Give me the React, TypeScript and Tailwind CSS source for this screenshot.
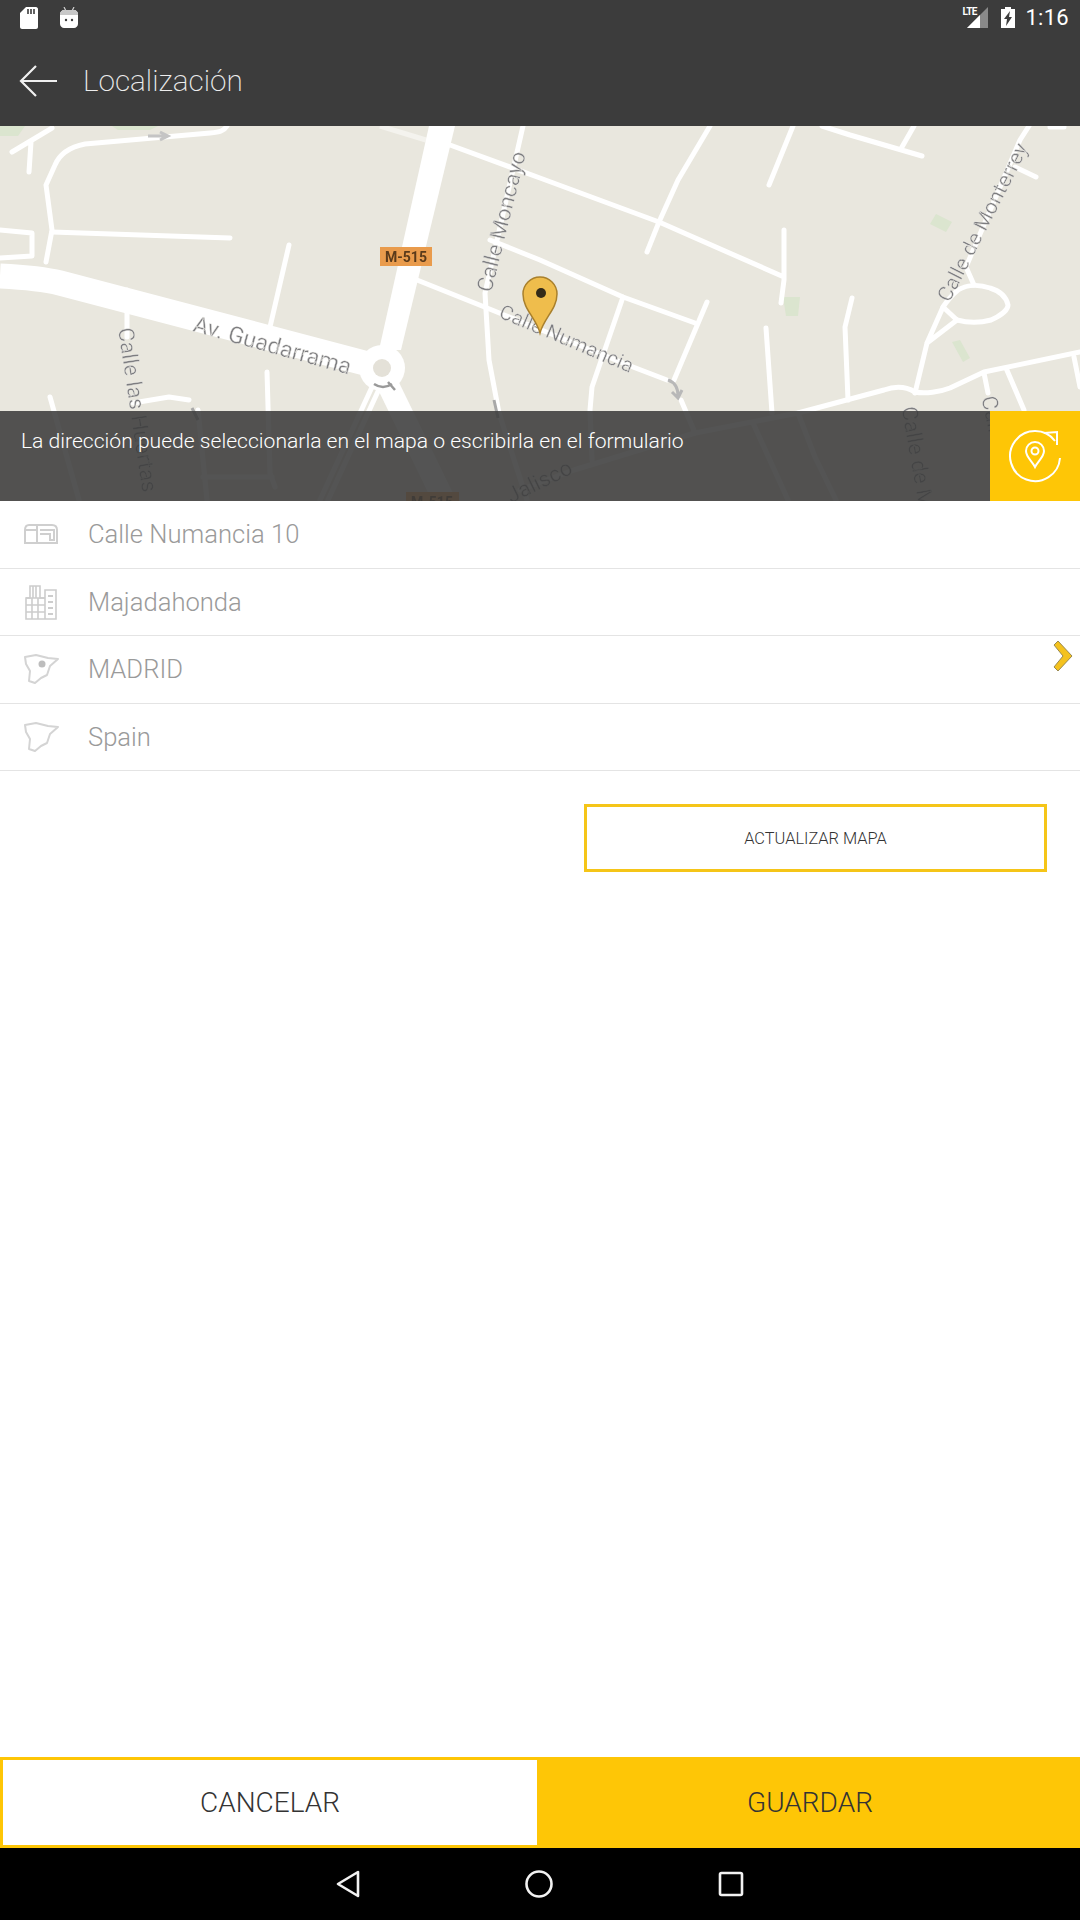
const thinRoads = [
  "M12 152L52 128M31 142L29 172",
  "M227 126C224 131 220 132 210 133L85 144C70 147 60 153 55 165L46 185L52 230L46 262",
  "M52 232L230 238",
  "M0 230L32 233L32 256L0 258",
  "M450 145L540 178L659 222L784 277L784 280L781 303M784 230L784 277",
  "M822 126L850 135L922 156M914 126L902 147",
  "M793 126L769 185",
  "M710 126L678 180L659 222L647 252",
  "M1015 167L1036 177M1029 126L1020 140L966 267L974 285M1050 127L1064 127",
  "M289 245L270 327",
  "M127 290L127 337M133 403L169 397L189 400",
  "M50 397L79 500M267 372L270 473L275 487M203 477L272 477M198 410L207 500",
  "M523 126L485 293L489 360L499 413L527 500",
  "M417 280L492 310L633 367L667 380M681 400L695 433",
  "M490 240L540 260L623 297L695 323",
  "M623 297L592 387L590 410L592 460",
  "M707 302L674 380",
  "M766 328L772 413",
  "M852 298L845 327L848 400",
  "M520 490L574 470L695 433L798 413L884 390C895 386 905 386 915 392C925 394 940 392 950 388L984 372L1080 352",
  "M915 393L927 343L943 307M927 343L957 320",
  "M943 307L957 320C968 323 980 323 991 320C1000 316 1008 310 1008 305C1006 296 1000 291 990 288C978 284 966 285 958 290C952 295 947 301 943 307Z",
  "M984 373L988 393M1006 368L1024 410M1074 357L1080 387",
  "M753 423L788 500M798 413L815 457L836 500",
  "M372 387L320 500M380 387L328 500",
];

const labels = [
  { text: "Calle Moncayo", x: 503, y: 222, r: -76, size: 22 },
  { text: "Calle Numancia", x: 566, y: 340, r: 23, size: 20.5 },
  { text: "Av. Guadarrama", x: 272, y: 347, r: 15.5, size: 23 },
  { text: "Calle las Huertas", x: 136, y: 410, r: 81.5, size: 22 },
  { text: "Calle de Monterrey", x: 984, y: 223, r: -63, size: 21 },
  { text: "Calle de Monterrey", x: 923, y: 497, r: 80, size: 22 },
  { text: "Calle", x: 992, y: 420, r: 78, size: 22 },
  { text: "Jalisco", x: 540, y: 483, r: -26, size: 22 },
];

function MapDrawing() {
  return (
    <svg viewBox="0 126 1080 375" className="absolute inset-0 w-full h-full blur-[0.6px]">
      <rect x="0" y="126" width="1080" height="375" fill="#e9e7de" />
      <path d="M0 126H25L18 136H0ZM112 126H158L150 130H118Z" fill="#dbe5cf" />
      <path d="M936 214L952 222L946 232L930 224ZM783 297H800L798 316H786ZM952 342L960 340L970 358L963 362Z" fill="#dbe5cf" />
      <g fill="none" stroke="#ffffff" strokeWidth="5" strokeLinejoin="round" strokeLinecap="round">
        {thinRoads.map((d) => (
          <path key={d} d={d} />
        ))}
      </g>
      <path d="M380 126L426 140" fill="none" stroke="#f4f3ee" strokeWidth="5" />
      <path d="M429 126H455L401 350H379Z" fill="#ffffff" />
      <path d="M0 276C20 277 40 278 60 283L372 365" fill="none" stroke="#ffffff" strokeWidth="25" />
      <path d="M389 387L444 500" fill="none" stroke="#ffffff" strokeWidth="22" />
      <circle cx="382" cy="368" r="23" fill="#ffffff" />
      <circle cx="382" cy="368" r="9" fill="#e4e1d8" />
      <path d="M148 136H168M160 132L168 136L160 140" fill="none" stroke="#c4c4c4" strokeWidth="3" />
      <path d="M668 380C674 382 678 386 678 396M672 392L678 398L682 390" fill="none" stroke="#b8b8b8" strokeWidth="3" />
      <path d="M374 384C380 388 386 388 392 384M388 382L395 390" fill="none" stroke="#9a9a9a" strokeWidth="2.5" />
      <path d="M192 408L198 420M494 400L498 418" fill="none" stroke="#a8a8a8" strokeWidth="3" />
      {labels.map((l) => (
        <text
          key={l.text + l.x}
          x={l.x}
          y={l.y}
          fontSize={l.size}
          fill="#7d7d80"
          stroke="#f4f3ee"
          strokeWidth="0.4"
          textAnchor="middle"
          dominantBaseline="middle"
          fontFamily="Roboto, sans-serif"
          transform={`rotate(${l.r} ${l.x} ${l.y})`}
        >
          {l.text}
        </text>
      ))}
      <rect x="380" y="247" width="52" height="19" fill="#e99b4c" />
      <text x="406" y="262" fontSize="14" fontWeight="700" fill="#5a3a1a" textAnchor="middle" fontFamily="Roboto, sans-serif">M-515</text>
      <rect x="406" y="492" width="53" height="19" fill="#f0a050" />
      <text x="432" y="507" fontSize="14" fontWeight="700" fill="#5a3a1a" textAnchor="middle" fontFamily="Roboto, sans-serif">M-515</text>
      <path d="M540 333C536 318 523 309 523 294A17 17 0 0 1 557 294C557 309 544 318 540 333Z" fill="#efbd4c" stroke="#a9802c" strokeWidth="1.5" />
      <circle cx="541" cy="293" r="5" fill="#332a18" />
    </svg>
  );
}

function SpainIcon({ dot }: { dot?: boolean }) {
  return (
    <svg viewBox="0 0 36 30" className="w-[36px] h-[30px] blur-[0.4px]" fill="none" stroke="#d4d4d4" strokeWidth="2" strokeLinejoin="round">
      <path d="M2 3L13 1L25 4L35 5L27 12L24 21L18 24L12 29L6 27L7 17L3 10Z" />
      {dot && <circle cx="19" cy="10" r="3.5" fill="#bdbdbd" stroke="none" />}
    </svg>
  );
}

function StreetIcon() {
  return (
    <svg viewBox="0 0 34 20" className="w-[34px] h-[20px] blur-[0.4px]" fill="none" stroke="#cfcfcf" strokeWidth="2">
      <path d="M1 6C1 2 3 1 5 1H28C32 1 33 3 33 6V19H1Z" />
      <path d="M13 2V19M1 6H13M16 6H30V16H26V10H16" />
    </svg>
  );
}

function BuildingIcon() {
  return (
    <svg viewBox="0 0 32 36" className="w-[32px] h-[36px] blur-[0.4px]" fill="none" stroke="#cdcdcd" strokeWidth="1.6">
      <path d="M1 35V14H5V2H15V14H20V35ZM20 35V6H31V35Z" />
      <path d="M1 21H20M1 28H20M7 14V35M13 14V35M8 2V14M11 2V14M1 14H20" />
      <path d="M23 12H28M23 18H28M23 24H28M23 30H28" strokeWidth="2" />
    </svg>
  );
}

const rows = [
  { label: "Calle Numancia 10", icon: <StreetIcon /> },
  { label: "Majadahonda", icon: <BuildingIcon /> },
  { label: "MADRID", icon: <SpainIcon dot />, arrow: true },
  { label: "Spain", icon: <SpainIcon /> },
];

export default function App() {
  return (
    <div className="min-h-[1920px] flex flex-col bg-white font-['Roboto',sans-serif]">
      {/* header */}
      <div className="h-[126px] bg-[#3c3c3c] text-white">
        <div className="h-[35px] flex items-center pl-[20px] pr-[11px]">
          <svg viewBox="0 0 18 22" className="w-[18px] h-[22px]">
            <path d="M6 0H16C17 0 18 1 18 2V20C18 21 17 22 16 22H2C1 22 0 21 0 20V6Z" fill="#ffffff" />
            <path d="M8 2V7M11 2V7M14 2V7" stroke="#3c3c3c" strokeWidth="1.6" />
          </svg>
          <svg viewBox="0 0 18 21" className="w-[18px] h-[21px] ml-[22px]">
            <path d="M4 0L6 4M14 0L12 4" stroke="#d0d0d0" strokeWidth="1.2" />
            <path d="M0 7C0 5 2 3 4 3H14C16 3 18 5 18 7V17C18 19 16 21 14 21H4C2 21 0 19 0 17Z" fill="#ffffff" />
            <path d="M0 7C0 5 2 3 4 3H14C16 3 18 5 18 7V8H0Z" fill="#c8c8c8" />
            <circle cx="6" cy="13" r="1.2" fill="#3c3c3c" />
            <circle cx="12" cy="13" r="1.2" fill="#3c3c3c" />
          </svg>
          <div className="flex-1" />
          <div className="relative w-[26px] h-[21px]">
            <svg viewBox="0 0 21 21" className="absolute right-0 top-0 w-[21px] h-[21px]">
              <path d="M21 0V21H0Z" fill="#8a8a8a" />
              <path d="M13 8V21H0Z" fill="#ffffff" />
            </svg>
            <span className="absolute left-0 top-[-1px] text-[10px] leading-[12px] font-bold tracking-[-0.5px]">LTE</span>
          </div>
          <svg viewBox="0 0 14 21" className="w-[14px] h-[21px] ml-[13px]">
            <path d="M4 0H10V2H14V21H0V2H4Z" fill="#ffffff" />
            <path d="M9 4L3 12H6L5 19L11 10H8Z" fill="#3c3c3c" />
          </svg>
          <span className="ml-[10px] text-[22px] leading-[26px] tracking-[0.3px]">1:16</span>
        </div>
        <div className="h-[91px] flex items-center pl-[19px]">
          <svg viewBox="0 0 38 32" className="w-[38px] h-[32px]" fill="none" stroke="#f0f0f0" strokeWidth="2.2">
            <path d="M38 16H2M17 1L2 16L17 31" />
          </svg>
          <span className="ml-[26px] text-[29.7px] leading-[36px] font-extralight text-[#ededed]">Localización</span>
        </div>
      </div>

      {/* map */}
      <div className="relative h-[375px] overflow-hidden">
        <MapDrawing />
        <div className="absolute left-0 right-0 bottom-0 h-[90px] flex">
          <div className="flex-1 bg-[#3c3c3c]/[0.88] pl-[21px] pt-[15px]">
            <p className="text-[21.1px] leading-[30px] font-light text-white">
              La dirección puede seleccionarla en el mapa o escribirla en el formulario
            </p>
          </div>
          <div className="w-[90px] bg-[#fec606] flex items-center justify-center">
            <svg viewBox="0 0 56 56" className="w-[56px] h-[56px]" fill="none" stroke="#ffffff" strokeWidth="2">
              <path d="M53 30A25 25 0 1 1 48 13" />
              <path d="M37 5L50 4L50 17" />
              <path d="M28 39C25 33 19 29 19 23A9 9 0 0 1 37 23C37 29 31 33 28 39Z" />
              <circle cx="28" cy="23" r="3.5" />
            </svg>
          </div>
        </div>
      </div>

      {/* form rows */}
      <div>
        {rows.map((row) => (
          <div key={row.label} className="relative h-[67.5px] border-b border-[#e4e4e4] flex items-center">
            <div className="w-[88px] flex justify-center pr-[6px]">{row.icon}</div>
            <span className="text-[25.6px] leading-[30px] font-light text-[#9a9a9a]">{row.label}</span>
            {row.arrow && (
              <svg viewBox="0 0 20 32" className="absolute right-[7px] top-[4px] w-[20px] h-[32px]">
                <path d="M5 1L19 16L5 31L1 27L10 16L1 5Z" fill="#f4c21e" stroke="#9a8a50" strokeWidth="1" />
              </svg>
            )}
          </div>
        ))}
      </div>

      <div className="flex justify-end pr-[33px] pt-[33px]">
        <button className="w-[463px] h-[68px] border-[3px] border-[#f5c518] bg-white text-[16.4px] pt-[3px] font-light text-[#333333]">
          ACTUALIZAR MAPA
        </button>
      </div>

      <div className="flex-1" />

      {/* bottom buttons */}
      <div className="h-[91px] flex">
        <button className="w-[540px] border-[3px] border-[#fec606] bg-white text-[28px] font-light text-[#333333]">CANCELAR</button>
        <button className="flex-1 bg-[#fec606] text-[28px] font-light text-[#333333]">GUARDAR</button>
      </div>

      {/* nav bar */}
      <div className="h-[72px] bg-black flex items-center justify-center gap-[165px]">
        <svg viewBox="0 0 24 28" className="w-[24px] h-[28px]" fill="none" stroke="#f2f2f2" strokeWidth="2.6" strokeLinejoin="round">
          <path d="M22 2V26L2 14Z" />
        </svg>
        <svg viewBox="0 0 28 28" className="w-[28px] h-[28px]" fill="none" stroke="#f2f2f2" strokeWidth="2.6">
          <circle cx="14" cy="14" r="12.5" />
        </svg>
        <svg viewBox="0 0 26 26" className="w-[26px] h-[26px]" fill="none" stroke="#f2f2f2" strokeWidth="2.6">
          <rect x="2" y="2" width="22" height="22" rx="1.5" />
        </svg>
      </div>
    </div>
  );
}
